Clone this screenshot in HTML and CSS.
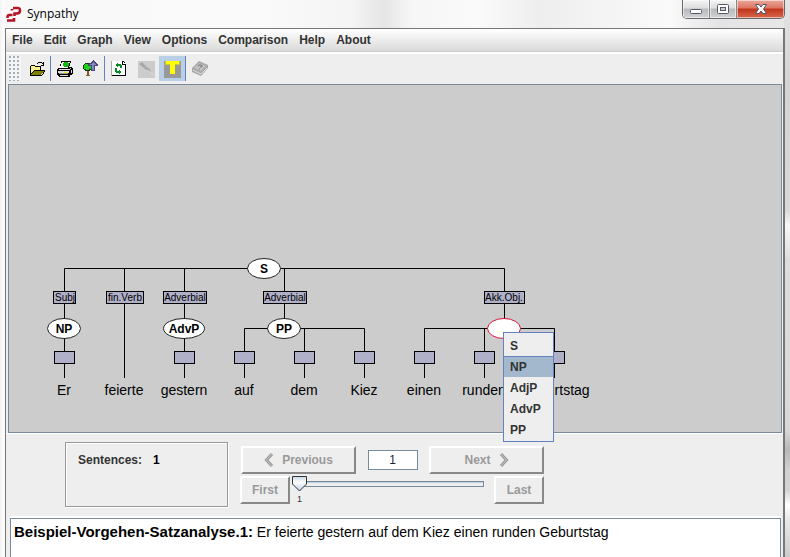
FILE: index.html
```html
<!DOCTYPE html>
<html lang="en">
<head>
<meta charset="utf-8">
<title>Synpathy</title>
<link rel="stylesheet" href="styles.css">
</head>
<body>
<div class="window">
  <header class="titlebar">
    <svg class="logo" width="17" height="17" viewBox="0 0 17 17" aria-hidden="true">
      <g fill="none" stroke="#b51226" stroke-width="2.600">
        <path d="M6 4.500V3M7 2H11Q14 1.500 14 4.500Q14 7.500 11 7.500H8.500V10"/>
        <path d="M6.500 9H3Q1.500 9 1.500 12M1 14.500H8V12"/>
      </g>
    </svg>
    <span class="title">Synpathy</span>
    <div class="window-buttons">
      <button class="wb" type="button" aria-label="Minimize"><svg width="14" height="14" viewBox="0 0 14 14"><rect x="1.500" y="6.500" width="11" height="4" rx="1" fill="#fff" stroke="#54566a"/></svg></button>
      <button class="wb" type="button" aria-label="Maximize"><svg width="14" height="14" viewBox="0 0 14 14"><rect x="1.500" y="1.500" width="11" height="9" rx="1" fill="#fff" stroke="#54566a"/><rect x="4.500" y="4.500" width="5" height="3" fill="#ccc" stroke="#54566a"/></svg></button>
      <button class="wb wb-close" type="button" aria-label="Close"><svg width="14" height="14" viewBox="0 0 14 14"><path d="M1.500 1.500H5L7 4L9 1.500H12.500L9.500 6L12.500 10.500H9L7 8L5 10.500H1.500L4.500 6Z" fill="#fff" stroke="#54566a"/></svg></button>
    </div>
  </header>
  <main class="app">
    <nav class="menubar">
      <button type="button">File</button>
      <button type="button">Edit</button>
      <button type="button">Graph</button>
      <button type="button">View</button>
      <button type="button">Options</button>
      <button type="button">Comparison</button>
      <button type="button">Help</button>
      <button type="button">About</button>
    </nav>
    <div class="toolbar">
      <span class="grip"></span>
      <button class="tool sep" type="button" aria-label="Open"><svg width="18" height="18" viewBox="0 0 18 18" shape-rendering="crispEdges">
        <path d="M2 14V6h1V5h4v1h6v4h3L12 15H2z" fill="#f7f08a"/>
        <path d="M7 10h10v1h-1v1h-1v1h-1v1h-1v1H3v-1h1v-1h1v-1h1v-1h1z" fill="#808000"/>
        <path d="M3 5h4v1H3zM2 6h1v9H2zM7 6h6v1H7zM12 7h1v3h-1zM6 10h11v1H6zM5 11h1v1H5zM4 12h1v1H4zM3 13h1v1H3zM2 15h12v1H2zM14 14h1v1h-1zM15 12h1v2h-1zM16 11h1v1h-1zM10 2h4v1h-4zM9 3h1v1H9zM14 3h1v1h-1zM15 2h1v4h-1zM13 5h3v1h-3z"/>
      </svg></button>
      <button class="tool" type="button" aria-label="Print"><svg width="18" height="18" viewBox="0 0 18 18" shape-rendering="crispEdges">
        <path d="M5 1h10v1l-2 5h3v1h1v6h-1v1h-2v2H3v-1H2v-1H1V9h1V8h2z"/>
        <path d="M6 2h8l-2 6H4z" fill="#fff"/><path d="M8 2h4v1h1v3h-1v1H8V6H7V3h1z" fill="#12b812"/>
        <path d="M3 9h11v1H3zM2 11h11v2H2zM4 15h8v1H4zM14 8h1v1h-1zM15 10h1v3h-1z" fill="#ddd"/>
        <path d="M3 13h9v1H3z" fill="#999"/><path d="M8 12h3v1H8z" fill="#ee0"/>
      </svg></button>
      <button class="tool sep" type="button" aria-label="Export tree"><svg width="18" height="18" viewBox="0 0 18 18" shape-rendering="crispEdges">
        <path d="M5 10h2v5h1v1H4v-1h1z" fill="#8b5521"/><path d="M3 3h4v1h2v2h1v4H8v1H3v-1H2V9H1V5h1V4h1z" fill="#103c10"/>
        <path d="M3 4h4v1h2v4H7v1H4V9H2V5h1z" fill="#1ed01e"/>
        <path d="M11 0h1v1h1v1h1v1h1v1h1v2h-3v5H9V6H6V4h1V3h2V2h1V1h1z" fill="#484878"/><path d="M11 2h1v1h1v1h1v1h-2v5h-2V5H8V4h2V3h1z" fill="#8585bb"/>
      </svg></button>
      <button class="tool" type="button" aria-label="Refresh"><svg width="18" height="18" viewBox="0 0 18 18" shape-rendering="crispEdges">
        <path d="M1 1h12l3 3v12H1z" fill="#fff"/><path d="M1 1h1v15H1z" fill="#aaa"/><path d="M2 15h14v1H2zM15 4h1v12h-1zM12 1h1v3h3v1h-4zM13 1h1v1h-1zM14 2h1v1h-1z"/>
        <path d="M7 3h1v1h3v1h1v3h-2V6H8v1H7V6H6V4h1zM5 8h2v3h2v-1h1v1h1v2h-1v1H9v-1H6v-1H5z" fill="#078a20"/>
      </svg></button>
      <button class="tool" type="button" aria-label="Edit node" disabled><svg width="18" height="18" viewBox="0 0 18 18"><path d="M1 1h17v17H1z" fill="#ccc"/><path d="M2 4l3-2 5 5 3 2 1 3-3-1-3-2z" fill="#a9a9a9"/><path d="M10 10l7 5" fill="none" stroke="#ddd"/></svg></button>
      <button class="tool sep selected" type="button" aria-label="Text" aria-pressed="true"><svg width="18" height="18" viewBox="0 0 18 18" shape-rendering="crispEdges"><path d="M1 1h17v17H1z" fill="#999"/><path d="M3 1h13v4h-4v9H7V5H3z" fill="#ff0"/><path d="M2 1h1v3h4v1H2zM16 1h1v4h-5V4h4z" fill="#d0c830"/></svg></button>
      <button class="tool" type="button" aria-label="Help" disabled><svg width="18" height="18" viewBox="0 0 18 18"><path d="M1 8L8 1L17 5L17 8L10 16L1 12Z" fill="#a9a9a9"/><path d="M3 8L8 3L15 6L10 11Z" fill="#c2c2c2"/><path d="M2 10L10 14L16 8" fill="none" stroke="#dedede"/><path d="M7 6Q9 4 11 6Q11 7 9 7M8 9h1" fill="none" stroke="#8d8d8d" stroke-width="1.400"/></svg></button>
    </div>
    <section class="canvas">
      <svg class="tree" width="640" height="347" viewBox="9 85 640 347" role="img" aria-label="Syntax tree">
        <path class="edge" d="M64.500 378V268.500H504.500V328M124.500 268V378M184.500 268V378M284.500 268V328M244.500 378V328.500H364.500V378M304.500 328V378M424.500 378V328.500H554.500V378M484.500 328V378"/>
        <g class="box">
          <rect x="53.500" y="291.500" width="22" height="12"/><rect x="106.500" y="291.500" width="37" height="12"/>
          <rect x="163.500" y="291.500" width="43" height="12"/><rect x="263.500" y="291.500" width="43" height="12"/>
          <rect x="484.500" y="291.500" width="40" height="12"/>
          <rect x="54.500" y="351.500" width="20" height="12"/><rect x="174.500" y="351.500" width="20" height="12"/>
          <rect x="234.500" y="351.500" width="20" height="12"/><rect x="294.500" y="351.500" width="20" height="12"/>
          <rect x="354.500" y="351.500" width="20" height="12"/><rect x="414.500" y="351.500" width="20" height="12"/>
          <rect x="474.500" y="351.500" width="20" height="12"/><rect x="544.500" y="351.500" width="20" height="12"/>
        </g>
        <g class="label">
          <text x="65" y="301">Subj</text><text x="125" y="301">fin.Verb</text><text x="185" y="301">Adverbial</text><text x="285" y="301">Adverbial</text><text x="504" y="301">Akk.Obj.</text>
        </g>
        <g class="node">
          <ellipse cx="264" cy="268.500" rx="16.500" ry="10"/><ellipse cx="64" cy="328.500" rx="16.500" ry="10"/>
          <ellipse cx="184" cy="328.500" rx="20.500" ry="10"/><ellipse cx="284" cy="328.500" rx="16.500" ry="10"/>
          <ellipse class="active" cx="504" cy="328.500" rx="16.500" ry="10"/>
        </g>
        <g class="category">
          <text x="264" y="273">S</text><text x="64" y="333">NP</text><text x="184" y="333">AdvP</text><text x="284" y="333">PP</text>
        </g>
        <g class="word">
          <text x="64" y="395">Er</text><text x="124" y="395">feierte</text><text x="184" y="395">gestern</text><text x="244" y="395">auf</text><text x="304" y="395">dem</text><text x="364" y="395">Kiez</text><text x="424" y="395">einen</text><text x="484" y="395">runden</text><text x="555" y="395">Geburtstag</text>
        </g>
      </svg>
      <div class="popup" role="menu">
        <button type="button" role="menuitem">S</button>
        <button class="current" type="button" role="menuitem">NP</button>
        <button type="button" role="menuitem">AdjP</button>
        <button type="button" role="menuitem">AdvP</button>
        <button type="button" role="menuitem">PP</button>
      </div>
    </section>
    <section class="controls">
      <div class="count"><span>Sentences:</span><b>1</b></div>
      <div class="pager">
        <div class="pager-row steps">
          <button class="btn" type="button" disabled><svg width="10" height="14" viewBox="0 0 10 14"><path d="M8 1L2.500 7L8 13" fill="none" stroke="#999" stroke-width="3"/><path d="M8 1L2.500 7L8 13" fill="none" stroke="#c4c4c4"/></svg>Previous</button>
          <input class="number" type="text" value="1" aria-label="Sentence number">
          <button class="btn" type="button" disabled>Next<svg width="10" height="14" viewBox="0 0 10 14"><path d="M2 1L7.500 7L2 13" fill="none" stroke="#999" stroke-width="3"/><path d="M2 1L7.500 7L2 13" fill="none" stroke="#c4c4c4"/></svg></button>
        </div>
        <div class="pager-row">
          <button class="btn end" type="button" disabled>First</button>
          <div class="slider">
            <input id="position" type="range" min="1" max="2" value="1">
            <label for="position">1</label>
          </div>
          <button class="btn end" type="button" disabled>Last</button>
        </div>
      </div>
    </section>
    <section class="sentence"><p><b>Beispiel-Vorgehen-Satzanalyse.1:</b> Er feierte gestern auf dem Kiez einen runden Geburtstag</p></section>
  </main>
</div>
</body>
</html>
```

FILE: styles.css
```css
* { box-sizing: border-box; }
body {
  margin: 0;
  font: bold 12px/16px "Liberation Sans", Arial, sans-serif;
  color: #333;
}
button { font: inherit; color: inherit; padding: 0; margin: 0; border: 0; background: none; }
svg { display: block; flex: none; }

.window {
  display: flex;
  flex-direction: column;
  min-height: 100vh;
  padding: 0 5px;
  background:
    linear-gradient(90deg, #f2f2f2, #fcfcfc 3px, transparent 6px) left / 6px 100% no-repeat,
    linear-gradient(#e4e4e4, #d4d4d4 80px, #d8d8d8 210px, #f8f8f8 225px, #ddd 260px, #d8d8d8 430px, #b8b8b8 450px, #d0d0d0 470px, #d4d4d4 490px, #fff 505px, #e8e8e8 520px, #ccc) right / 6px 100% no-repeat,
    linear-gradient(90deg, #f8f8f8, #fafafa 260px, #f5f5f5 350px, #e5e5e5 385px, #f6f6f6 410px, #fafafa 480px, #eee 540px, #fafafa 670px, #e4e4e4 720px, #e8e8e8);
}
.titlebar { display: flex; height: 28px; padding-left: 1px; }
.logo { margin-top: 6px; }
.title { margin-left: 4px; font: 12px/28px "Open Sans", sans-serif; color: #000; }
.window-buttons {
  display: flex;
  height: 19px;
  margin-left: auto;
  border: 1px solid #68696e;
  border-top: 0;
  border-radius: 0 0 5px 5px;
  overflow: hidden;
}
.wb {
  display: flex;
  justify-content: center;
  width: 27px;
  padding-top: 3px;
  border-right: 1px solid #85868a;
  background: linear-gradient(#f4f4f4, #dedede 45%, #b9babc 50%, #d2d2d4);
  box-shadow: inset 0 0 0 1px #ffffff88;
}
.wb-close {
  width: 47px;
  border-right: 0;
  background: linear-gradient(#eba79b, #dc7561 45%, #bf331b 50%, #d8694c);
}

.app {
  display: flex;
  flex: 1;
  flex-direction: column;
  border: solid #777;
  border-width: 1px 2px 0 1px;
  background: #eee;
}
.menubar {
  display: flex;
  gap: 11px;
  height: 23px;
  padding-left: 6px;
  background: linear-gradient(#fff, #dadada);
  border-bottom: 1px solid #ccc;
}
.toolbar {
  display: flex;
  height: 32px;
  padding: 2px 0 3px 3px;
  border-top: 2px solid #fff;
}
.grip {
  width: 12px;
  margin-right: 3px;
  background:
    linear-gradient(#a8b4c0, #a8b4c0) 0 0 / 0 0,
    radial-gradient(circle at 1px 1px, #a4aeb8 1px, transparent 1px) 0 0 / 4px 4px,
    #f4f4f4;
}
.tool { display: flex; align-items: center; justify-content: center; width: 27px; }
.sep { border-right: 1px solid #6382bf; }
.selected { background: #b8cfe5; }

.canvas {
  position: relative;
  margin: 0 1px 0 2px;
  border: 1px solid #7a8a99;
  background: #ccc;
}
.edge { fill: none; stroke: #000; }
.box { fill: #b0b0c8; stroke: #000; }
.node { fill: #fff; stroke: #222; }
.active { stroke: #dc143c; }
.label, .category, .word { fill: #000; text-anchor: middle; }
.label { font: 10px "Liberation Sans", sans-serif; }
.category { font: bold 12px "Liberation Sans", sans-serif; }
.word { font: 14px "Liberation Sans", sans-serif; }
.popup {
  position: absolute;
  left: 494px;
  top: 247px;
  display: flex;
  flex-direction: column;
  width: 51px;
  padding: 2px 0 1px;
  border: 1px solid #6382bf;
  background: #eee;
}
.popup button { height: 21px; padding-left: 6px; text-align: left; }
.popup .current { background: #a3b8cc; border-top: 1px solid #6382bf; }

.controls {
  display: flex;
  gap: 12px;
  padding: 8px 0 11px 59px;
  border-top: 1px solid #fff;
}
.count {
  display: flex;
  gap: 11px;
  width: 163px;
  height: 65px;
  padding: 9px 12px;
  border: 1px solid #999;
  box-shadow: 1px 1px #fff, inset 1px 1px #fff;
}
.count b { color: #000; }
.pager { display: flex; flex-direction: column; gap: 2px; width: 304px; padding-top: 4px; }
.pager-row { display: flex; }
.steps { align-items: center; justify-content: space-between; padding-left: 1px; }
.btn {
  display: flex;
  align-items: center;
  justify-content: center;
  gap: 8px;
  width: 115px;
  height: 28px;
  border: 2px solid;
  border-color: #fff #888 #888 #fff;
  color: #999;
}
.end { width: 50px; }
.number {
  width: 50px;
  height: 20px;
  padding: 0;
  border: 1px solid #7a8a99;
  background: #fff;
  font: 12px "Liberation Sans", sans-serif;
  color: #223;
  text-align: center;
}
.slider { flex: 1; padding: 0 10px 0 2px; }
.slider input {
  display: block;
  appearance: none;
  width: 100%;
  height: 16px;
  margin: 0;
  background:
    linear-gradient(#7a8a99, #7a8a99) right 5px / 1px 6px no-repeat,
    linear-gradient(#7a8a99 1px, #b8cfe5 1px 2px, #eee 2px 5px, #7a8a99 5px) 8px 5px / 100% 6px no-repeat;
}
.slider input::-webkit-slider-thumb {
  appearance: none;
  width: 15px;
  height: 16px;
  background: url("data:image/svg+xml,%3Csvg xmlns='http://www.w3.org/2000/svg' width='15' height='16'%3E%3ClinearGradient id='g' x2='0' y2='1'%3E%3Cstop stop-color='%23c4d8ea'/%3E%3Cstop offset='.4' stop-color='%23fff'/%3E%3Cstop offset='1' stop-color='%23b8cfe5'/%3E%3C/linearGradient%3E%3Cpath d='M.5 .5H14.500V8L7.500 15L.5 8Z' fill='url(%23g)' stroke='%23333'/%3E%3C/svg%3E") no-repeat;
}
.slider label { display: block; padding-left: 5px; font: 9px/14px "Liberation Sans", sans-serif; color: #333; }

.sentence {
  flex: 1;
  margin: 0 2px 0 4px;
  border: solid #7a8a99;
  border-width: 1px 1px 0;
  background: #fff;
  box-shadow: 0 -2px #fff;
}
.sentence p { margin: 5px 3px; font-size: 14px; line-height: 16px; font-weight: normal; color: #000; }
.sentence b { font-size: 15px; }
```
